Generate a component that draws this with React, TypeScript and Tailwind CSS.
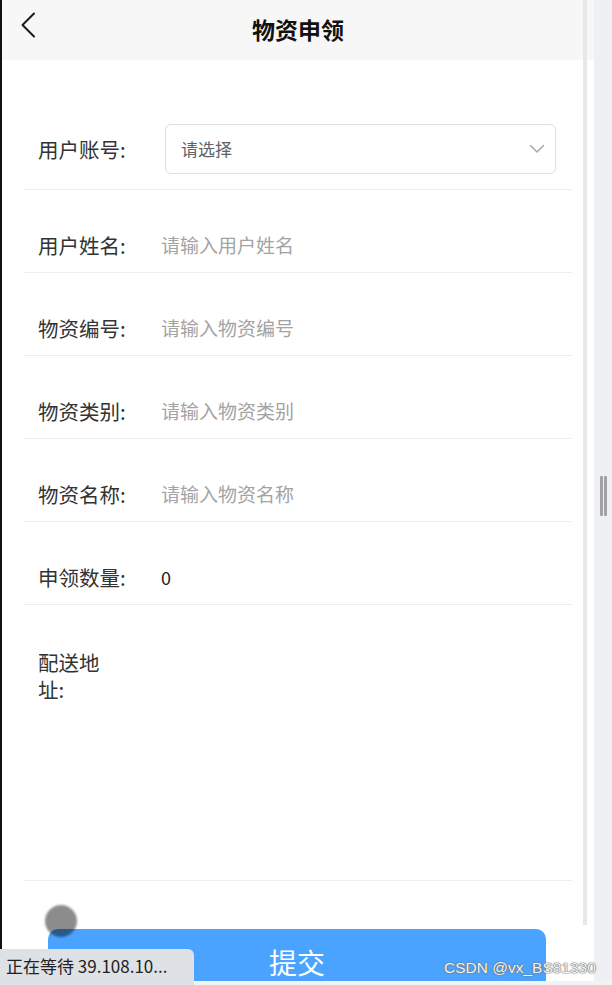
import React from "react";

const FONT = '"Noto Sans CJK SC", "Noto Sans", sans-serif';

function Row({ label, placeholder, value }: { label: string; placeholder?: string; value?: string }) {
  return (
    <div className="flex items-center pt-[41px] pb-[13px] border-b border-[#ebedf0]">
      <div className="pl-[14px] w-[137px] shrink-0 text-[20.5px] leading-[28px] text-[#333]">{label}</div>
      {value !== undefined ? (
        <div className="text-[18px] leading-[28px] text-[#222]">{value}</div>
      ) : (
        <input
          className="flex-1 h-[28px] text-[19px] bg-transparent outline-none text-[#333] placeholder:text-[#a3a3a3]"
          placeholder={placeholder}
        />
      )}
    </div>
  );
}

export default function App() {
  return (
    <div className="relative w-[612px] h-[985px] overflow-hidden bg-[#eef0f4] flex flex-col" style={{ fontFamily: FONT }}>
      <div className="flex h-[981px] shrink-0">
        <div className="relative w-[594px] h-full overflow-hidden bg-white border-l-2 border-[#111] flex flex-col">
          {/* header */}
          <div className="relative h-[60px] shrink-0 bg-[#f7f7f7] flex items-center justify-center">
            <svg className="absolute left-[19px] top-[12px]" width="15" height="26" viewBox="0 0 15 26" fill="none">
              <polyline points="13,1.5 1.5,13 13,24.5" stroke="#1a1a1a" strokeWidth="2" strokeLinecap="round" strokeLinejoin="round" />
            </svg>
            <div className="text-[23px] font-bold text-[#111] leading-none mb-[2px]">物资申领</div>
          </div>

          {/* form */}
          <div className="mx-[22px] flex flex-col">
            <div className="flex items-center pt-[64px] pb-[15px] border-b border-[#ebedf0]">
              <div className="pl-[14px] w-[141px] shrink-0 text-[20.5px] leading-[28px] text-[#333]">用户账号:</div>
              <div className="flex-1 mr-[16px] h-[50px] rounded-[6px] border border-[#dcdfe6] flex items-center justify-between pl-[15px] pr-[10px]">
                <span className="text-[17px] text-[#606266]">请选择</span>
                <svg width="16" height="10" viewBox="0 0 16 10" fill="none">
                  <polyline points="1.5,1.5 8,8 14.5,1.5" stroke="#a8abb2" strokeWidth="1.6" strokeLinecap="round" strokeLinejoin="round" />
                </svg>
              </div>
            </div>
            <Row label="用户姓名:" placeholder="请输入用户姓名" />
            <Row label="物资编号:" placeholder="请输入物资编号" />
            <Row label="物资类别:" placeholder="请输入物资类别" />
            <Row label="物资名称:" placeholder="请输入物资名称" />
            <Row label="申领数量:" value="0" />
            <div className="flex h-[276px] pt-[44px] border-b border-[#ebedf0]">
              <div className="ml-[14px] w-[72px] shrink-0 text-[20.5px] leading-[27px] text-[#333]">配送地址:</div>
            </div>
          </div>

          <div className="mt-[48px] ml-[46px] w-[498px] h-[52px] shrink-0 rounded-t-[10px] bg-[#4aa3fe] flex justify-center pt-[19px]">
            <span className="text-[28px] text-white leading-none">提交</span>
          </div>

          {/* inner scroll track */}
          <div className="absolute right-[7px] top-0 w-[4px] h-[925px] bg-[#e8e8e8]" />
        </div>

        {/* right gutter */}
        <div className="flex-1 flex items-center justify-center">
          <div className="flex gap-[1px] mt-[10px]">
            <div className="w-[3px] h-[40px] bg-[#a3a3a3] rounded-[1px]" />
            <div className="w-[3px] h-[40px] bg-[#a3a3a3] rounded-[1px]" />
          </div>
        </div>
      </div>
      <div className="h-[4px] bg-[#f1f3f4]" />

      {/* touch indicator */}
      <div className="absolute left-[45px] top-[905px] w-[32px] h-[32px] rounded-full bg-black/45 blur-[0.8px]" />

      {/* status bubble */}
      <div className="absolute left-0 bottom-0 w-[194px] h-[36px] bg-[#dee1e6] rounded-tr-[6px] flex items-center pl-[6px] pb-[2px]">
        <span className="text-[17px] text-[#222] whitespace-nowrap">正在等待 39.108.10...</span>
      </div>

      {/* watermark */}
      <div
        className="absolute left-[444px] top-[958px] text-[15.5px] leading-[20px] text-[#f4f4f4] whitespace-nowrap [text-shadow:0_0_1px_#666,0_0_1px_#666,0_0_2px_#888]"
        style={{ fontFamily: '"Liberation Sans", Arial, sans-serif' }}
      >
        CSDN @vx_BS81330
      </div>
    </div>
  );
}
